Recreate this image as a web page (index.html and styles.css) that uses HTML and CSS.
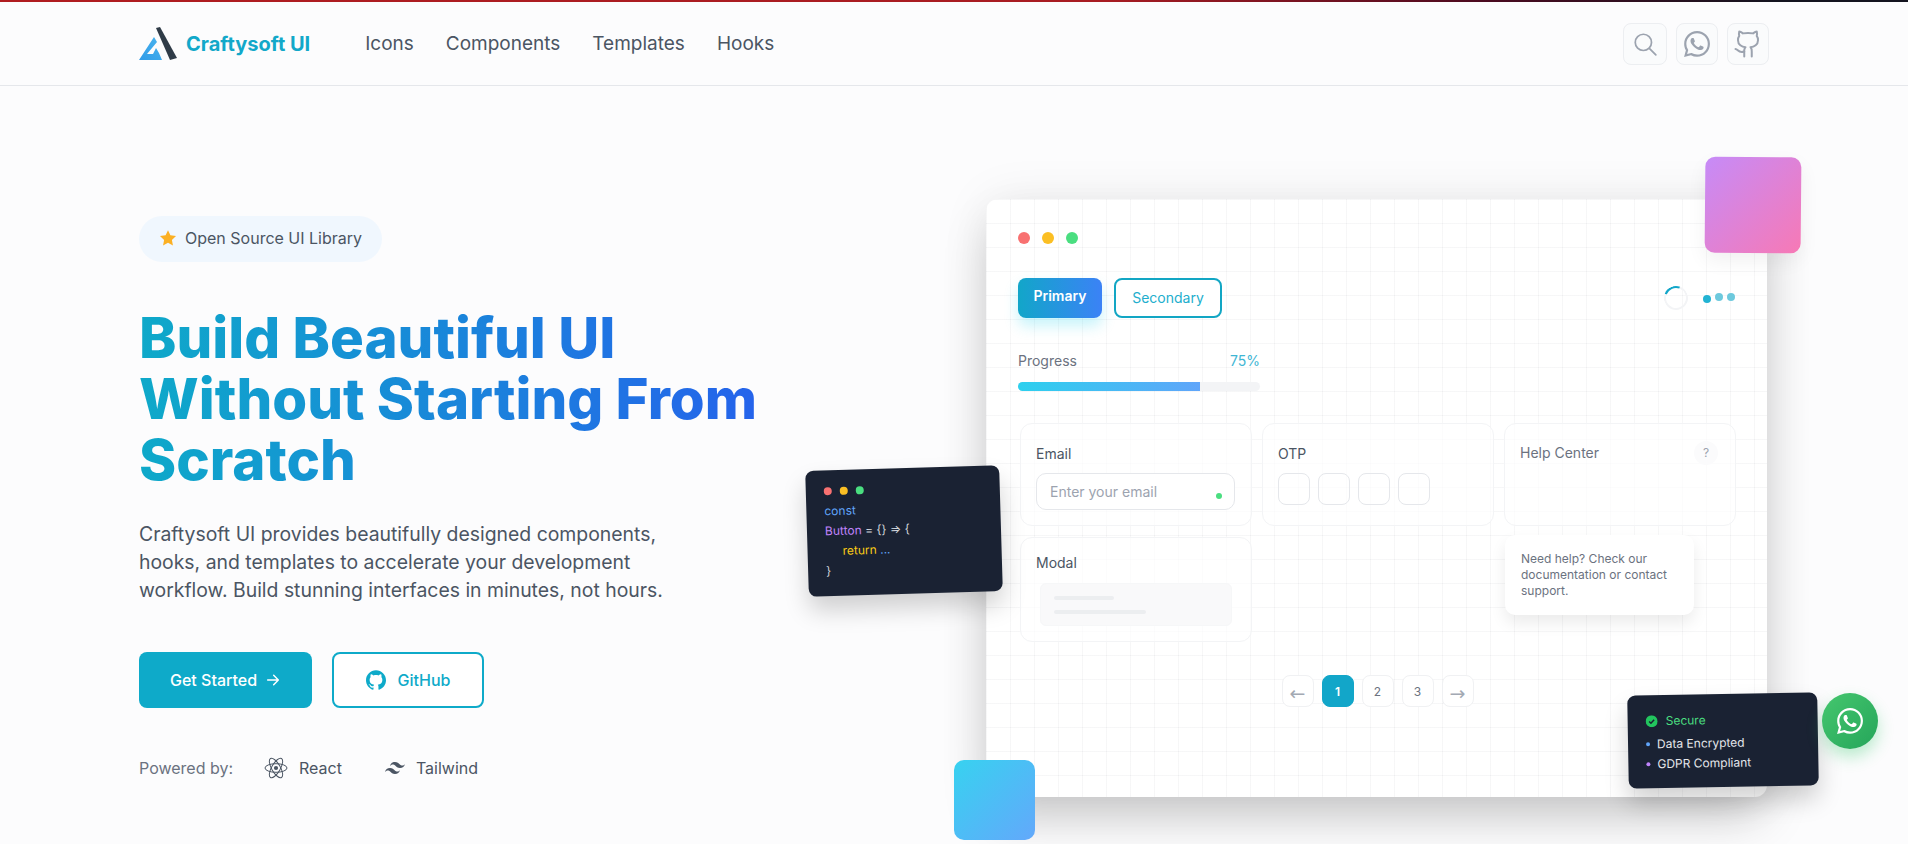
FILE: index.html
```html
<!DOCTYPE html>
<html lang="en">
<head>
<meta charset="UTF-8" />
<meta name="viewport" content="width=device-width, initial-scale=1.0" />
<title>Craftysoft UI</title>
<link rel="stylesheet" href="styles.css">
</head>
<body>
  <div class="topbar"></div>

  <header class="header">
    <a class="brand" href="#">
      <svg class="brand-logo" viewBox="0 0 38 33" width="38" height="33">
        <defs>
          <linearGradient id="logoblue" x1="0" y1="1" x2="1" y2="0">
            <stop offset="0" stop-color="#2f9be8" />
            <stop offset="1" stop-color="#4ab4ee" />
          </linearGradient>
        </defs>
        <polygon fill="url(#logoblue)" points="15,10 18,15 8,27 14,27 17,21 20,26 23,33 0,33" />
        <polygon fill="#2f3b47" points="17,1 21,0 38,31 31,33" />
      </svg>
      <span>Craftysoft UI</span>
    </a>
    <nav class="nav">
      <a href="#">Icons</a>
      <a href="#">Components</a>
      <a href="#">Templates</a>
      <a href="#">Hooks</a>
    </nav>
    <div class="header-actions">
      <button class="icon-btn icon-btn-wide">
        <svg viewBox="0 0 24 24" width="26" height="26" fill="none" stroke="currentColor" stroke-width="1.6" stroke-linecap="round"><circle cx="10.5" cy="10.5" r="7.5" /><path d="M16 16l6 6" /></svg>
      </button>
      <button class="icon-btn">
        <svg viewBox="0 0 24 24" width="26" height="26" fill="currentColor"><path d="M17.472 14.382c-.297-.149-1.758-.867-2.03-.967-.273-.099-.471-.148-.67.15-.197.297-.767.966-.94 1.164-.173.199-.347.223-.644.075-.297-.15-1.255-.463-2.39-1.475-.883-.788-1.48-1.761-1.653-2.059-.173-.297-.018-.458.13-.606.134-.133.298-.347.446-.52.149-.174.198-.298.298-.497.099-.198.05-.371-.025-.52-.075-.149-.669-1.612-.916-2.207-.242-.579-.487-.5-.669-.51-.173-.008-.371-.01-.57-.01-.198 0-.52.074-.792.372-.272.297-1.04 1.016-1.04 2.479 0 1.462 1.065 2.875 1.213 3.074.149.198 2.096 3.2 5.077 4.487.709.306 1.262.489 1.694.625.712.227 1.36.195 1.871.118.571-.085 1.758-.719 2.006-1.413.248-.694.248-1.289.173-1.413-.074-.124-.272-.198-.57-.347m-5.421 7.403h-.004a9.87 9.87 0 01-5.031-1.378l-.361-.214-3.741.982.998-3.648-.235-.374a9.86 9.86 0 01-1.51-5.26c.001-5.45 4.436-9.884 9.888-9.884 2.64 0 5.122 1.03 6.988 2.898a9.825 9.825 0 012.893 6.994c-.003 5.45-4.437 9.884-9.885 9.884m8.413-18.297A11.815 11.815 0 0012.05 0C5.495 0 .16 5.335.157 11.892c0 2.096.547 4.142 1.588 5.945L.057 24l6.305-1.654a11.882 11.882 0 005.683 1.448h.005c6.554 0 11.89-5.335 11.893-11.893a11.821 11.821 0 00-3.48-8.413z" /></svg>
      </button>
      <button class="icon-btn">
        <svg viewBox="0 0 24 24" width="30" height="30" fill="none" stroke="currentColor" stroke-width="1.6" stroke-linecap="round" stroke-linejoin="round"><path d="M15 22v-4a4.8 4.8 0 0 0-1-3.5c3 0 6-2 6-5.5.08-1.25-.27-2.48-1-3.5.28-1.15.28-2.35 0-3.5 0 0-1 0-3 1.5-2.64-.5-5.36-.5-8 0C6 2 5 2 5 2c-.3 1.15-.3 2.35 0 3.5A5.403 5.403 0 0 0 4 9c0 3.5 3 5.5 6 5.5-.39.49-.68 1.05-.85 1.65-.17.6-.22 1.23-.15 1.85v4" /><path d="M9 18c-4.51 2-5-2-7-2" /></svg>
      </button>
    </div>
  </header>

  <main class="hero">
    <section class="intro">
      <div class="badge">
        <svg viewBox="0 0 24 24" width="18" height="18" fill="#fbb024"><path d="M12 1.5l3.2 6.9 7.5.9-5.5 5.2 1.4 7.5L12 18.3l-6.6 3.7 1.4-7.5-5.5-5.2 7.5-.9z" /></svg>
        <span>Open Source UI Library</span>
      </div>
      <h1 class="title">Build Beautiful UI<br>Without Starting From<br>Scratch</h1>
      <p class="lead">Craftysoft UI provides beautifully designed components, hooks, and templates to accelerate your development workflow. Build stunning interfaces in minutes, not hours.</p>
      <div class="cta">
        <a class="btn btn-fill" href="#">Get Started
          <svg viewBox="0 0 24 24" width="16" height="16" fill="none" stroke="currentColor" stroke-width="2.2" stroke-linecap="round" stroke-linejoin="round"><path d="M4 12h16M13 5l7 7-7 7" /></svg>
        </a>
        <a class="btn btn-line" href="#">
          <svg viewBox="0 0 24 24" width="20" height="20" fill="currentColor"><path d="M12 .297c-6.63 0-12 5.373-12 12 0 5.303 3.438 9.8 8.205 11.385.6.113.82-.258.82-.577 0-.285-.01-1.04-.015-2.04-3.338.724-4.042-1.61-4.042-1.61C4.422 18.07 3.633 17.7 3.633 17.7c-1.087-.744.084-.729.084-.729 1.205.084 1.838 1.236 1.838 1.236 1.07 1.835 2.809 1.305 3.495.998.108-.776.417-1.305.76-1.605-2.665-.3-5.466-1.332-5.466-5.93 0-1.31.465-2.38 1.235-3.22-.135-.303-.54-1.523.105-3.176 0 0 1.005-.322 3.3 1.23.96-.267 1.98-.399 3-.405 1.02.006 2.04.138 3 .405 2.28-1.552 3.285-1.23 3.285-1.23.645 1.653.24 2.873.12 3.176.765.84 1.23 1.91 1.23 3.22 0 4.61-2.805 5.625-5.475 5.92.42.36.81 1.096.81 2.22 0 1.606-.015 2.896-.015 3.286 0 .315.21.69.825.57C20.565 22.092 24 17.592 24 12.297c0-6.627-5.373-12-12-12" /></svg>
          GitHub
        </a>
      </div>
      <div class="powered">
        <span class="powered-label">Powered by:</span>
        <span class="tech tech-react">
          <svg viewBox="0 0 24 24" width="24" height="24" fill="none" stroke="#4b5563" stroke-width="1"><circle cx="12" cy="12" r="2.1" fill="#4b5563" stroke="none" /><ellipse cx="12" cy="12" rx="11" ry="4.3" /><ellipse cx="12" cy="12" rx="11" ry="4.3" transform="rotate(60 12 12)" /><ellipse cx="12" cy="12" rx="11" ry="4.3" transform="rotate(120 12 12)" /></svg>
          React
        </span>
        <span class="tech">
          <svg viewBox="0 0 24 24" width="20" height="20" fill="#4b5563"><path d="M12.001,4.8c-3.2,0-5.2,1.6-6,4.8c1.2-1.6,2.6-2.2,4.2-1.8c0.913,0.228,1.565,0.89,2.288,1.624 C13.666,10.618,15.027,12,18.001,12c3.2,0,5.2-1.6,6-4.8c-1.2,1.6-2.6,2.2-4.2,1.8c-0.913-0.228-1.565-0.89-2.288-1.624 C16.337,6.182,14.976,4.8,12.001,4.8z M6.001,12c-3.2,0-5.2,1.6-6,4.8c1.2-1.6,2.6-2.2,4.2-1.8c0.913,0.228,1.565,0.89,2.288,1.624 c1.177,1.194,2.538,2.576,5.512,2.576c3.2,0,5.2-1.6,6-4.8c-1.2,1.6-2.6,2.2-4.2,1.8c-0.913-0.228-1.565-0.89-2.288-1.624 C10.337,13.382,8.976,12,6.001,12z" /></svg>
          Tailwind
        </span>
      </div>
    </section>

    <section class="preview">
      <div class="square square-pink"></div>
      <div class="square square-blue"></div>

      <div class="window-dots">
        <i class="dot dot-red"></i>
        <i class="dot dot-yellow"></i>
        <i class="dot dot-green"></i>
      </div>

      <div class="demo-row">
        <div class="demo-buttons">
          <button class="demo-primary">Primary</button>
          <button class="demo-secondary">Secondary</button>
        </div>
        <div class="loaders">
          <span class="spinner"></span>
          <span class="pulse"><i></i><i></i><i></i></span>
        </div>
      </div>

      <div class="progress">
        <div class="progress-head"><span>Progress</span><span class="progress-value">75%</span></div>
        <div class="progress-track"><div class="progress-fill"></div></div>
      </div>

      <div class="demo-grid">
        <div class="demo-card">
          <div class="demo-label">Email</div>
          <div class="fake-input">Enter your email<i></i></div>
        </div>
        <div class="demo-card">
          <div class="demo-label">OTP</div>
          <div class="otp"><i></i><i></i><i></i><i></i></div>
        </div>
        <div class="demo-card demo-card-help">
          <div class="help-head"><span>Help Center</span><span class="help-mark">?</span></div>
          <div class="help-tip">Need help? Check our documentation or contact support.</div>
        </div>
        <div class="demo-card">
          <div class="demo-label demo-label-modal">Modal</div>
          <div class="fake-modal"><i></i><i></i></div>
        </div>
      </div>

      <div class="pager">
        <span class="page page-arrow">←</span>
        <span class="page page-on">1</span>
        <span class="page">2</span>
        <span class="page">3</span>
        <span class="page page-arrow">→</span>
      </div>

      <div class="float-code">
        <div class="code-dots"><i class="dot-red"></i><i class="dot-yellow"></i><i class="dot-green"></i></div>
        <div class="code-line code-blue">const</div>
        <div class="code-line"><span class="code-purple">Button</span> = {} =&gt; {</div>
        <div class="code-line code-indent"><span class="code-yellow">return</span> <span class="code-blue">...</span></div>
        <div class="code-line">}</div>
      </div>

      <div class="float-secure">
        <div class="secure-head">
          <svg viewBox="0 0 24 24" width="12" height="12"><circle cx="12" cy="12" r="12" fill="#22c55e" /><path d="M7 12.5l3.5 3.5L17 9" fill="none" stroke="#1a2233" stroke-width="3" /></svg>
          Secure
        </div>
        <div class="secure-item"><i class="bullet-blue"></i>Data Encrypted</div>
        <div class="secure-item"><i class="bullet-purple"></i>GDPR Compliant</div>
      </div>
    </section>
  </main>

  <a class="whatsapp" href="#">
    <svg viewBox="0 0 24 24" width="26" height="26" fill="#fff"><path d="M17.472 14.382c-.297-.149-1.758-.867-2.03-.967-.273-.099-.471-.148-.67.15-.197.297-.767.966-.94 1.164-.173.199-.347.223-.644.075-.297-.15-1.255-.463-2.39-1.475-.883-.788-1.48-1.761-1.653-2.059-.173-.297-.018-.458.13-.606.134-.133.298-.347.446-.52.149-.174.198-.298.298-.497.099-.198.05-.371-.025-.52-.075-.149-.669-1.612-.916-2.207-.242-.579-.487-.5-.669-.51-.173-.008-.371-.01-.57-.01-.198 0-.52.074-.792.372-.272.297-1.04 1.016-1.04 2.479 0 1.462 1.065 2.875 1.213 3.074.149.198 2.096 3.2 5.077 4.487.709.306 1.262.489 1.694.625.712.227 1.36.195 1.871.118.571-.085 1.758-.719 2.006-1.413.248-.694.248-1.289.173-1.413-.074-.124-.272-.198-.57-.347m-5.421 7.403h-.004a9.87 9.87 0 01-5.031-1.378l-.361-.214-3.741.982.998-3.648-.235-.374a9.86 9.86 0 01-1.51-5.26c.001-5.45 4.436-9.884 9.888-9.884 2.64 0 5.122 1.03 6.988 2.898a9.825 9.825 0 012.893 6.994c-.003 5.45-4.437 9.884-9.885 9.884m8.413-18.297A11.815 11.815 0 0012.05 0C5.495 0 .16 5.335.157 11.892c0 2.096.547 4.142 1.588 5.945L.057 24l6.305-1.654a11.882 11.882 0 005.683 1.448h.005c6.554 0 11.89-5.335 11.893-11.893a11.821 11.821 0 00-3.48-8.413z" /></svg>
  </a>
</body>
</html>
```

FILE: styles.css
```css
* {
  box-sizing: border-box;
}
html, body {
  height: 844px;
  overflow: hidden;
}
body {
  margin: 0;
  font-family: Inter, 'Noto Sans', sans-serif;
  background: #fcfcfd;
  color: #4b5563;
}
a {
  text-decoration: none;
  color: inherit;
}
i {
  display: block;
}
.topbar {
  height: 2px;
  background: linear-gradient(90deg, #b01c20 0%, #a81c22 58%, #4a0a20 78%, #14141f 93%);
}

/* header */
.header {
  height: 84px;
  border-bottom: 1px solid #e5e7eb;
  padding: 0 139px;
  display: flex;
  align-items: center;
}
.brand {
  display: flex;
  align-items: center;
  gap: 9px;
  font-size: 20px;
  font-weight: 700;
  color: #12a8c9;
  margin-right: 55px;
}
.nav {
  display: flex;
  gap: 32px;
  font-size: 19px;
  font-weight: 400;
  color: #4b5563;
  padding-bottom: 1px;
}
.header-actions {
  margin-left: auto;
  display: flex;
  gap: 9px;
}
.icon-btn {
  width: 42px;
  height: 42px;
  padding: 0;
  display: flex;
  align-items: center;
  justify-content: center;
  background: #fafbfc;
  border: 1px solid #eceef1;
  border-radius: 8px;
  color: #9ca3af;
}
.icon-btn-wide {
  width: 44px;
}

/* hero */
.hero {
  display: flex;
  padding-left: 139px;
}
.intro {
  width: 847px;
  padding-top: 130px;
}
.badge {
  display: inline-flex;
  align-items: center;
  gap: 8px;
  height: 46px;
  padding: 0 20px 2px;
  border-radius: 23px;
  background: #f0f7fe;
  font-size: 16px;
  color: #4b5563;
}
.title {
  margin: 45px 0 0;
  font-size: 56.4px;
  line-height: 61px;
  font-weight: 800;
  background: linear-gradient(90deg, #0ea9c9, #2563eb);
  background-size: 620px 100%;
  background-repeat: no-repeat;
  -webkit-background-clip: text;
  background-clip: text;
  color: transparent;
  width: 640px;
}
.lead {
  margin: 30px 0 0;
  width: 545px;
  font-size: 19.4px;
  line-height: 28px;
  color: #4b5563;
}
.cta {
  display: flex;
  gap: 20px;
  margin-top: 48px;
}
.btn {
  height: 56px;
  display: flex;
  align-items: center;
  justify-content: center;
  border-radius: 8px;
  font-size: 16px;
  font-weight: 500;
}
.btn-fill {
  width: 173px;
  gap: 8px;
  background: #0eaac9;
  color: #fff;
}
.btn-line {
  width: 152px;
  gap: 12px;
  border: 2px solid #0eaac9;
  color: #0eaac9;
  background: #fff;
}
.powered {
  display: flex;
  align-items: center;
  margin-top: 48px;
  font-size: 16px;
  height: 24px;
}
.powered-label {
  color: #6b7280;
  margin-right: 31px;
}
.tech {
  display: flex;
  align-items: center;
  gap: 11px;
  color: #4b5563;
}
.tech-react {
  margin-right: 43px;
}

/* preview card */
.preview {
  position: relative;
  width: 781px;
  height: 598px;
  margin-top: 113px;
  padding: 33px 32px 32px;
  background-color: #fff;
  background-image:
    linear-gradient(rgba(17, 24, 39, 0.035) 1px, transparent 1px),
    linear-gradient(90deg, rgba(17, 24, 39, 0.035) 1px, transparent 1px);
  background-size: 24px 24px;
  border-radius: 12px;
  box-shadow: 0 25px 50px -6px rgba(0, 0, 0, 0.2), 0 0 50px rgba(0, 0, 0, 0.07);
}
.square {
  position: absolute;
  border-radius: 10px;
}
.square-pink {
  top: -42px;
  right: -34px;
  width: 96px;
  height: 96px;
  background: linear-gradient(135deg, #c68bf8, #f779b5);
  transform: rotate(0.5deg);
  box-shadow: 0 8px 20px rgba(0, 0, 0, 0.06);
}
.square-blue {
  left: -32px;
  top: 561px;
  width: 81px;
  height: 80px;
  background: linear-gradient(135deg, #37d2f0, #63a8fb);
}
.window-dots {
  display: flex;
  gap: 12px;
}
.dot {
  width: 12px;
  height: 12px;
  border-radius: 50%;
}
.dot-red {
  background: #f87171;
}
.dot-yellow {
  background: #fbbf24;
}
.dot-green {
  background: #4ade80;
}
.demo-row {
  display: flex;
  align-items: center;
  justify-content: space-between;
  margin-top: 34px;
}
.demo-buttons {
  display: flex;
  gap: 12px;
}
.demo-primary, .demo-secondary {
  height: 40px;
  border-radius: 8px;
  font-family: inherit;
  font-size: 14px;
}
.demo-primary {
  width: 84px;
  border: none;
  padding: 0 0 5px;
  font-weight: 600;
  color: #fff;
  background: linear-gradient(90deg, #12a6c9, #3b82f6);
  box-shadow: 0 8px 14px rgba(34, 211, 238, 0.25);
}
.demo-secondary {
  width: 108px;
  padding: 0 0 2px;
  border: 2px solid #12a6c4;
  background: #fff;
  color: #22aecd;
}
.loaders {
  display: flex;
  align-items: center;
  gap: 9px;
}
.spinner {
  width: 24px;
  height: 24px;
  border-radius: 50%;
  border: 2px solid #f3f4f6;
  border-top-color: #12a6c9;
  transform: rotate(-25deg);
  margin-right: 6px;
}
.pulse {
  display: flex;
  align-items: center;
  gap: 4px;
}
.pulse i {
  width: 8px;
  height: 8px;
  border-radius: 50%;
  background: #6dc9dd;
  margin-top: -3px;
}
.pulse i:first-child {
  background: #22b3d3;
  margin-top: 2px;
}
.progress {
  width: 242px;
  margin-top: 33px;
}
.progress-head {
  display: flex;
  justify-content: space-between;
  font-size: 14px;
  line-height: 20px;
  color: #6b7280;
}
.progress-value {
  color: #3fb6d4;
}
.progress-track {
  height: 9px;
  margin-top: 11px;
  background: #f3f4f6;
  border-radius: 5px;
  overflow: hidden;
}
.progress-fill {
  width: 75%;
  height: 100%;
  background: linear-gradient(90deg, #2dd0ee, #60a5fa);
}
.demo-grid {
  display: grid;
  grid-template-columns: repeat(3, 232px);
  grid-template-rows: 103px 105px;
  gap: 11px 10px;
  margin: 32px 0 0 2px;
}
.demo-card {
  position: relative;
  padding: 20px 15px 0;
  background: rgba(255, 255, 255, 0.65);
  border: 1px solid #f3f4f6;
  border-radius: 12px;
}
.demo-label {
  font-size: 14px;
  line-height: 20px;
  color: #4b5563;
}
.demo-label-modal {
  margin-top: -5px;
}
.fake-input {
  position: relative;
  width: 199px;
  height: 37px;
  margin-top: 9px;
  padding-left: 13px;
  display: flex;
  align-items: center;
  background: #fff;
  border: 1px solid #e5e7eb;
  border-radius: 10px;
  font-size: 14px;
  color: #9ca3af;
}
.fake-input i {
  position: absolute;
  right: 12px;
  top: 19px;
  width: 6px;
  height: 6px;
  border-radius: 50%;
  background: #4ade80;
}
.otp {
  display: flex;
  gap: 8px;
  margin-top: 9px;
}
.otp i {
  width: 32px;
  height: 32px;
  border: 1px solid #e5e7eb;
  border-radius: 8px;
}
.help-head {
  display: flex;
  justify-content: space-between;
  align-items: center;
  font-size: 14px;
  line-height: 20px;
  margin-top: -3px;
  color: #6b7280;
}
.help-mark {
  width: 24px;
  height: 24px;
  margin-right: 2px;
  display: flex;
  align-items: center;
  justify-content: center;
  border-radius: 50%;
  background: #fbfbfc;
  font-size: 12px;
  color: #9ca3af;
}
.help-tip {
  position: absolute;
  top: 111px;
  left: 0;
  width: 189px;
  height: 80px;
  padding: 16px 16px;
  background: #fff;
  border-radius: 10px;
  font-size: 12px;
  line-height: 16px;
  color: #6b7280;
  box-shadow: 0 8px 16px rgba(0, 0, 0, 0.08);
  z-index: 2;
}
.fake-modal {
  width: 192px;
  height: 43px;
  margin: 10px 0 0 4px;
  padding: 12px 13px;
  background: #f9f9fa;
  border: 1px solid #f6f7f8;
  border-radius: 6px;
}
.fake-modal i {
  height: 4px;
  width: 60px;
  background: #eceef0;
  border-radius: 2px;
}
.fake-modal i + i {
  width: 92px;
  margin-top: 10px;
}
.pager {
  display: flex;
  justify-content: center;
  gap: 8px;
  margin-top: 33px;
  padding-left: 2px;
}
.page {
  width: 32px;
  height: 32px;
  display: flex;
  align-items: center;
  justify-content: center;
  background: #fff;
  border: 1px solid #f0f1f3;
  border-radius: 8px;
  font-size: 12px;
  color: #6b7280;
}
.page-on {
  background: #12a6c9;
  border-color: #12a6c9;
  color: #fff;
  font-weight: 600;
}
.page-arrow {
  font-family: 'DejaVu Sans', sans-serif;
  font-size: 19px;
  color: #a3a9b3;
  padding-top: 3px;
}

/* floating dark cards */
.float-code, .float-secure {
  position: absolute;
  background: #1a2233;
  border-radius: 8px;
  font-size: 12px;
  box-shadow: 0 14px 24px rgba(0, 0, 0, 0.18);
}
.float-code {
  left: -179px;
  top: 269px;
  width: 194px;
  height: 126px;
  padding: 17px 18px;
  transform: rotate(-1.7deg);
  color: #d1d5db;
}
.code-dots {
  display: flex;
  gap: 8px;
  margin-bottom: 6px;
}
.code-dots i {
  width: 8px;
  height: 8px;
  border-radius: 50%;
}
.code-line {
  line-height: 20px;
}
.code-indent {
  padding-left: 17px;
}
.code-blue {
  color: #60a5fa;
}
.code-purple {
  color: #c084fc;
}
.code-yellow {
  color: #facc15;
}
.float-secure {
  left: 642px;
  top: 495px;
  width: 190px;
  height: 93px;
  padding: 16px 18px;
  transform: rotate(-1deg);
  color: #e5e7eb;
  z-index: 3;
}
.secure-head {
  display: flex;
  align-items: center;
  gap: 8px;
  line-height: 20px;
  color: #4ade80;
  margin-bottom: 3px;
}
.secure-item {
  display: flex;
  align-items: center;
  gap: 7px;
  line-height: 20px;
}
.secure-item i {
  width: 4px;
  height: 4px;
  border-radius: 50%;
}
.bullet-blue {
  background: #60a5fa;
}
.bullet-purple {
  background: #c084fc;
}
.whatsapp {
  position: fixed;
  left: 1822px;
  top: 693px;
  width: 56px;
  height: 56px;
  border-radius: 50%;
  display: flex;
  align-items: center;
  justify-content: center;
  background: linear-gradient(135deg, #45c76e, #25a55a);
  box-shadow: 0 8px 16px rgba(34, 197, 94, 0.3);
  z-index: 5;
}
```
